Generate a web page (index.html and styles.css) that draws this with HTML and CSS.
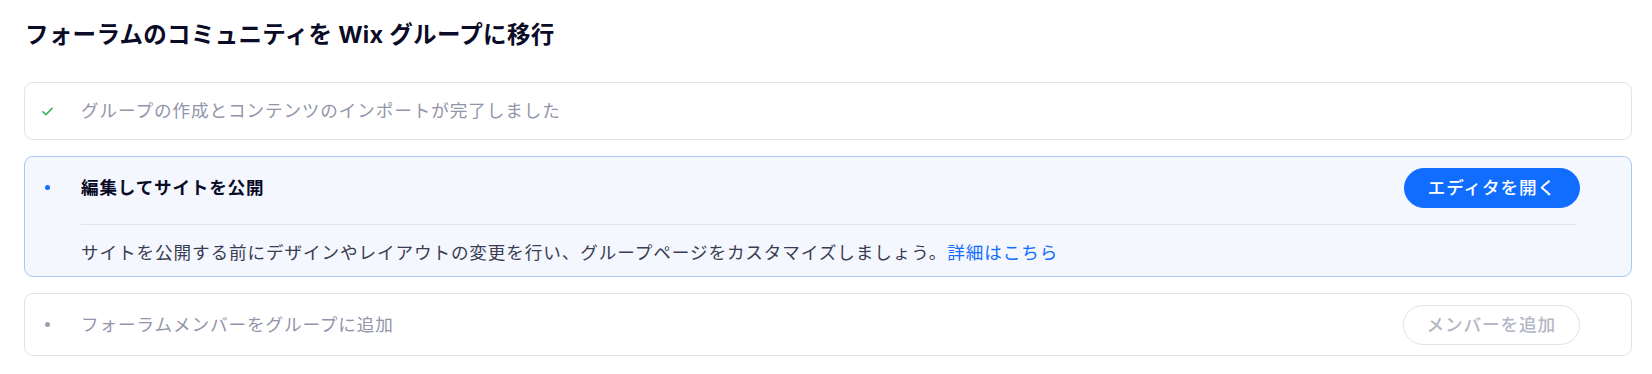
FILE: index.html
```html
<!DOCTYPE html>
<html lang="ja">
<head>
<meta charset="utf-8">
<title>フォーラムのコミュニティを Wix グループに移行</title>
<link rel="stylesheet" href="styles.css">
</head>
<body>
<div class="page">
  <h1 class="title">フォーラムのコミュニティを Wix グループに移行</h1>
  <div class="steps">
    <div class="step done">
      <div class="row">
        <span class="icon"><svg width="11" height="9" viewBox="0 0 11 9"><path d="M1 4.8 L4 7.6 L10 1.4" fill="none" stroke="#3fb55c" stroke-width="1.6" stroke-linecap="round" stroke-linejoin="round"/></svg></span>
        <span class="label">グループの作成とコンテンツのインポートが完了しました</span>
      </div>
    </div>
    <div class="step active">
      <div class="row">
        <span class="icon"><span class="dot dot-blue"></span></span>
        <span class="label strong">編集してサイトを公開</span>
        <button class="btn btn-primary">エディタを開く</button>
      </div>
      <div class="body">
        <p class="desc">サイトを公開する前にデザインやレイアウトの変更を行い、グループページをカスタマイズしましょう。<a class="link" href="#">詳細はこちら</a></p>
      </div>
    </div>
    <div class="step todo">
      <div class="row">
        <span class="icon"><span class="dot dot-gray"></span></span>
        <span class="label">フォーラムメンバーをグループに追加</span>
        <button class="btn btn-disabled" disabled>メンバーを追加</button>
      </div>
    </div>
  </div>
</div>
</body>
</html>
```
FILE: styles.css
```css
* { box-sizing: border-box; }
html, body { margin: 0; padding: 0; background: #ffffff; }
body {
  font-family: Inter, "Noto Sans CJK JP", sans-serif;
  color: #000624;
}
.page {
  padding: 20px 20px 0 24px;
}
.title {
  margin: 0 0 32px 1px;
  font-size: 23.5px;
  line-height: 30px;
  font-weight: 700;
  letter-spacing: 0.3px;
  color: #0a0b26;
}
.steps {
  display: flex;
  flex-direction: column;
  gap: 16px;
}
.step {
  border: 1px solid #dfe3ea;
  border-radius: 9px;
  background: #ffffff;
  padding: 15px 51px 15px 16px;
}
.step.active {
  background: #f4f7fe;
  border-color: #a9c7f7;
  padding-top: 10.5px;
  padding-bottom: 10.5px;
}
.step.todo {
  padding-top: 10.5px;
  padding-bottom: 10.5px;
}
.row {
  display: flex;
  align-items: center;
  min-height: 26px;
}
.icon {
  width: 12px;
  flex: 0 0 12px;
  display: flex;
  align-items: center;
  justify-content: center;
  margin-right: 28px;
}
.icon svg { display: block; }
.dot {
  width: 5px;
  height: 5px;
  border-radius: 50%;
}
.dot-blue { background: #116dff; }
.dot-gray { background: #9da1b4; }
.label {
  flex: 1 1 auto;
  font-size: 17.6px;
  line-height: 26px;
  letter-spacing: 0.9px;
  color: #9295aa;
}
.label.strong {
  color: #0a0b26;
  font-weight: 700;
  letter-spacing: 0.8px;
}
.btn {
  flex: 0 0 auto;
  height: 40px;
  padding: 0 23px;
  border-radius: 20px;
  font-family: Inter, "Noto Sans CJK JP", sans-serif;
  font-size: 17.6px;
  font-weight: 500;
  letter-spacing: 0.9px;
  line-height: 38px;
  cursor: pointer;
}
.btn-primary {
  background: #116dff;
  border: 1px solid #116dff;
  color: #ffffff;
}
.btn-disabled {
  background: transparent;
  border: 1px solid #dfe2e9;
  color: #b4b7c5;
}
.body {
  margin: 16px 4px 0 40px;
  border-top: 1px solid #dfe3ec;
  padding-top: 15px;
}
.desc {
  margin: 0;
  font-size: 17.6px;
  line-height: 26px;
  letter-spacing: 0.9px;
  color: #3a3d52;
}
.link {
  color: #116dff;
  text-decoration: none;
}
```
